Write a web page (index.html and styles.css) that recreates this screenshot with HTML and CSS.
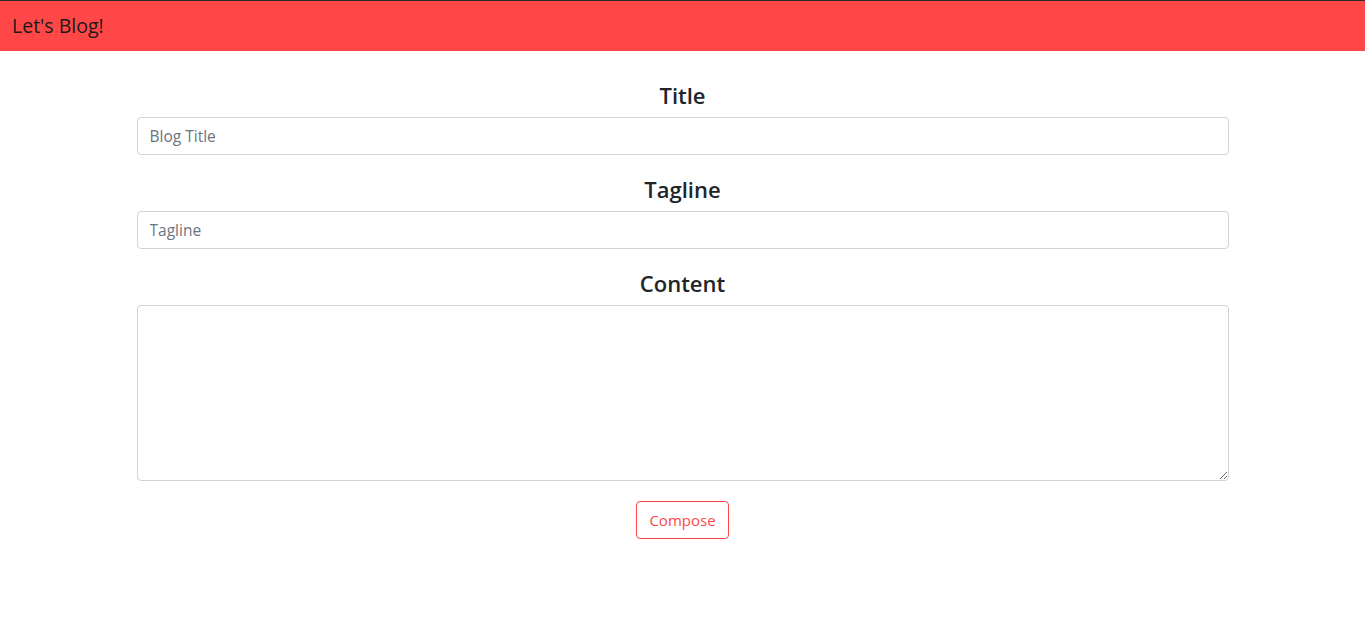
FILE: index.html
```html
<!DOCTYPE html>
<html>
<head>
<meta charset="utf-8">
<link rel="stylesheet" href="styles.css">
</head>
<body>
<nav class="navbar"><span class="brand">Let's Blog!</span></nav>
<main class="compose">
  <div class="field">
    <h3 class="label">Title</h3>
    <input class="input" type="text" placeholder="Blog Title">
  </div>
  <div class="field">
    <h3 class="label">Tagline</h3>
    <input class="input" type="text" placeholder="Tagline">
  </div>
  <div class="field">
    <h3 class="label">Content</h3>
    <textarea class="input area"></textarea>
  </div>
  <div class="actions"><button class="btn">Compose</button></div>
</main>
</body>
</html>
```
FILE: styles.css
```css
* { box-sizing: border-box; }
body {
  margin: 0;
  font-family: "Open Sans", "Noto Sans", sans-serif;
  color: #212529;
  background: #fff;
}
.navbar {
  height: 51px;
  border-top: 1px solid #2b2b2b;
  background: #ff4747;
  display: flex;
  align-items: center;
  padding: 0 12px 1px;
}
.brand {
  font-size: 19.5px;
  color: #1a1a1a;
}
.compose {
  width: 1092px;
  margin: 0 auto;
  padding-top: 30px;
}
.field { margin-bottom: 20px; }
.label {
  margin: 0 0 8px;
  text-align: center;
  font-size: 22px;
  font-weight: 600;
  line-height: 28px;
}
.input {
  display: block;
  width: 100%;
  height: 38px;
  padding: 6px 12px;
  border: 1px solid #ced4da;
  border-radius: 4px;
  font-family: inherit;
  font-size: 15.5px;
  color: #495057;
  outline: none;
}
.input::placeholder { color: #6c757d; }
.area { height: 176px; resize: vertical; }
.actions { display: flex; justify-content: center; }
.btn {
  height: 38px;
  padding: 0 12px;
  background: #fff;
  border: 1px solid #ff4747;
  border-radius: 4px;
  color: #ff4747;
  font-family: inherit;
  font-size: 15px;
}
```
